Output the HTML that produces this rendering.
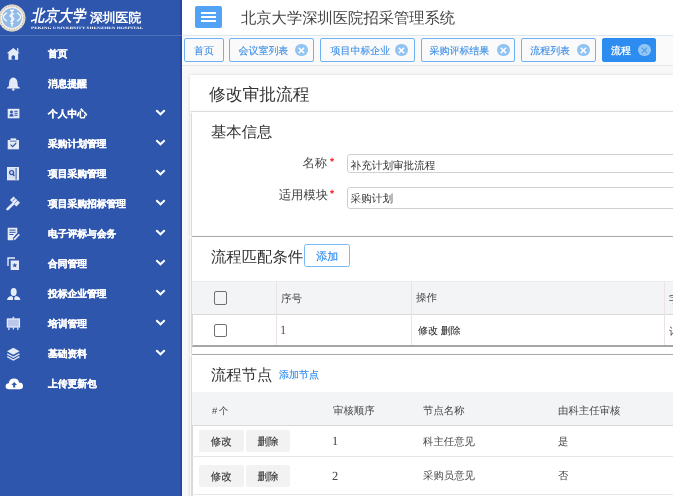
<!DOCTYPE html>
<html><head><meta charset="utf-8">
<style>
*{box-sizing:border-box;margin:0;padding:0}
html,body{width:673px;height:496px;overflow:hidden;background:#f8f8f8;font-family:"Liberation Sans",sans-serif;text-rendering:geometricPrecision}
#wrap{position:absolute;left:0;top:0;width:673px;height:496px;opacity:.999}
#side{position:absolute;left:0;top:0;width:181.5px;height:496px;background:#2f56ad;}
#side .edge{position:absolute;right:0;top:0;width:1.5px;height:496px;background:#25489e;z-index:2}
#logo{position:absolute;left:0;top:0;width:181.5px;height:36px;border-bottom:1px solid #4d6fbd;z-index:3}
.mi{position:absolute;left:0;width:180px;height:30px;color:#fff;font-weight:bold;font-size:9.75px;}
.mi .t{position:absolute;left:48px;top:10px;line-height:14px;white-space:nowrap;-webkit-text-stroke:0.22px #fff;will-change:transform}
svg.ic{position:absolute}
.mi .chev{position:absolute;left:155px;top:11px}
#hdr{position:absolute;left:181px;top:0;width:492px;height:36px;background:#fff;border-bottom:1px solid #dde6ef}
#menubtn{position:absolute;left:14px;top:6px;width:27px;height:22px;background:#52a2f5;border-radius:2px}
#menubtn i{position:absolute;left:6.3px;width:14.5px;height:1.9px;background:#fff}
#title{position:absolute;left:60px;top:10px;font-size:15.3px;color:#444;line-height:18px;white-space:nowrap}
#tabs{position:absolute;left:181px;top:36px;width:492px;height:30px;background:#fafafa;border-bottom:1px solid #e4e4e4}
.tab{position:absolute;top:2.2px;height:24.3px;border:1.3px solid #6db2f4;border-radius:2px;background:#fafafa;color:#3a8ee6;font-size:9.95px;line-height:25.6px;-webkit-text-stroke:.1px #3a8ee6;white-space:nowrap}
.tab .x{position:absolute;top:4.7px;width:12.8px;height:12.8px;border-radius:50%;background:#8fc3f3}
.tab.act{background:#2d8cf0;border-color:#2d8cf0;color:#fff}
.tab.act .x{background:#93c6f5}
#cardhd{position:absolute;left:190px;top:74.5px;width:500px;height:500px;background:#fff;box-shadow:0 0 4px rgba(0,0,0,.13)}
#cdiv{position:absolute;left:190px;top:111px;width:500px;height:1px;background:#e6e6e6}
#ctitle{position:absolute;left:209px;top:83px;font-size:16.75px;color:#333;line-height:24px;white-space:nowrap}
.panel{position:absolute;left:192px;width:500px;background:#fff;box-shadow:0 1.2px 1.2px rgba(0,0,0,.42),-1px 0 3px rgba(0,0,0,.1)}
.ph{position:absolute;left:210.5px;font-size:15.35px;color:#333;line-height:20px;white-space:nowrap}
.lbl{position:absolute;font-size:12.3px;color:#444;line-height:16px;white-space:nowrap;text-align:right}
.star{position:absolute;color:#f22;font-size:10.5px;line-height:10px;font-weight:bold}
.inp{position:absolute;left:346.5px;width:400px;border:1px solid #d0d0d0;border-radius:3px;font-size:10.6px;color:#333;white-space:nowrap;padding-left:2.6px}
#addbtn{position:absolute;left:304px;top:244.3px;width:46.3px;height:22.6px;border:1.2px solid #78b9f4;border-radius:2.5px;color:#2d8cf0;font-size:11px;line-height:24.5px;text-align:center;background:#fff;-webkit-text-stroke:.15px #2d8cf0}
.th{position:absolute;background:#f3f4f6}
.cell{position:absolute;font-size:10.5px;color:#474747;white-space:nowrap;line-height:14px}
.cell.t2{font-size:10.4px}
.vl{position:absolute;width:1px;background:#ece4e4}
.hl{position:absolute;height:1px;background:#dcdcdc}
.cb{position:absolute;width:13px;height:13.5px;border:1.7px solid #707070;border-radius:2px;background:transparent}
.btn{position:absolute;height:22px;background:#f2f2f2;border-radius:2px;font-size:10.5px;color:#3a3a3a;text-align:center;line-height:25px;-webkit-text-stroke:.15px #3a3a3a;will-change:transform}
.tab,#addbtn,.cell,.lbl,.inp,.ph,#ctitle,#title,.star,.mi .t{will-change:transform}
</style></head><body><div id="wrap">
<div id="side">
  <div class="edge"></div>
  <div id="logo">
    <svg style="position:absolute;left:-3px;top:2.5px" width="30" height="30" viewBox="0 0 30 30">
      <circle cx="15" cy="15" r="13.4" fill="#ece7da"/>
      <circle cx="15" cy="15" r="13.2" fill="none" stroke="#cfc6b2" stroke-width=".5"/>
      <circle cx="15" cy="15" r="11.9" fill="none" stroke="#8a7f6c" stroke-width="1" stroke-dasharray="1 1.6" opacity=".6"/>
      <circle cx="15" cy="15" r="10.4" fill="#93bbe7" stroke="#fff" stroke-width=".8"/>
      <path d="M10 9.8 Q2.8 14 10 18.3 M20 9.8 Q27.2 14 20 18.3" fill="none" stroke="#fff" stroke-width="1.1"/>
      <path d="M15 6.8 V23.5 M13 7.3 H17" fill="none" stroke="#fff" stroke-width="1.3"/>
      <path d="M17.3 10.8 Q12.3 11.3 13 13.3 Q17.5 14.6 16.8 16.6 Q16 18.5 13.2 18.3 M13.5 20.5 H16.5" fill="none" stroke="#fff" stroke-width="1.1"/>
    </svg>
    <div style="position:absolute;left:31px;top:4px;color:#fff;font-size:13.2px;line-height:20px;font-style:italic;letter-spacing:0.6px;font-weight:700;white-space:nowrap;transform-origin:0 0;transform:scaleY(1.2);will-change:transform">北京大学</div>
    <div style="position:absolute;left:90px;top:10px;color:#fff;font-size:12.8px;line-height:16px;font-weight:bold;white-space:nowrap;will-change:transform">深圳医院</div>
    <div style="position:absolute;left:31px;top:26px;color:#fff;font-family:'Liberation Serif',serif;font-size:8px;line-height:8px;font-weight:bold;white-space:nowrap;transform-origin:0 0;transform:scale(0.65,0.45)">PEKING UNIVERSITY SHENZHEN HOSPITAL</div>
  </div>
  <div class="mi" style="top:38px"><div class="t">首页</div></div>
  <div class="mi" style="top:68px"><div class="t">消息提醒</div></div>
  <div class="mi" style="top:98px"><div class="t">个人中心</div><svg class="chev" width="11" height="8" viewBox="0 0 11 8"><path d="M1.3 1.3 L5.5 5.3 L9.7 1.3" fill="none" stroke="#fff" stroke-width="2"/></svg></div>
  <div class="mi" style="top:128px"><div class="t">采购计划管理</div><svg class="chev" width="11" height="8" viewBox="0 0 11 8"><path d="M1.3 1.3 L5.5 5.3 L9.7 1.3" fill="none" stroke="#fff" stroke-width="2"/></svg></div>
  <div class="mi" style="top:158px"><div class="t">项目采购管理</div><svg class="chev" width="11" height="8" viewBox="0 0 11 8"><path d="M1.3 1.3 L5.5 5.3 L9.7 1.3" fill="none" stroke="#fff" stroke-width="2"/></svg></div>
  <div class="mi" style="top:188px"><div class="t">项目采购招标管理</div><svg class="chev" width="11" height="8" viewBox="0 0 11 8"><path d="M1.3 1.3 L5.5 5.3 L9.7 1.3" fill="none" stroke="#fff" stroke-width="2"/></svg></div>
  <div class="mi" style="top:218px"><div class="t">电子评标与会务</div><svg class="chev" width="11" height="8" viewBox="0 0 11 8"><path d="M1.3 1.3 L5.5 5.3 L9.7 1.3" fill="none" stroke="#fff" stroke-width="2"/></svg></div>
  <div class="mi" style="top:248px"><div class="t">合同管理</div><svg class="chev" width="11" height="8" viewBox="0 0 11 8"><path d="M1.3 1.3 L5.5 5.3 L9.7 1.3" fill="none" stroke="#fff" stroke-width="2"/></svg></div>
  <div class="mi" style="top:278px"><div class="t">投标企业管理</div><svg class="chev" width="11" height="8" viewBox="0 0 11 8"><path d="M1.3 1.3 L5.5 5.3 L9.7 1.3" fill="none" stroke="#fff" stroke-width="2"/></svg></div>
  <div class="mi" style="top:308px"><div class="t">培训管理</div><svg class="chev" width="11" height="8" viewBox="0 0 11 8"><path d="M1.3 1.3 L5.5 5.3 L9.7 1.3" fill="none" stroke="#fff" stroke-width="2"/></svg></div>
  <div class="mi" style="top:338px"><div class="t">基础资料</div><svg class="chev" width="11" height="8" viewBox="0 0 11 8"><path d="M1.3 1.3 L5.5 5.3 L9.7 1.3" fill="none" stroke="#fff" stroke-width="2"/></svg></div>
  <div class="mi" style="top:368px"><div class="t">上传更新包</div></div>
  <div id="icons">
    <svg class="ic" style="left:7px;top:46px" width="14" height="15" viewBox="0 0 14 15"><path d="M6.3 1.9 L12.8 7.2 H11.1 V13.8 H1.5 V7.2 H-0.2Z" fill="#e6ebf8"/><rect x="10" y="2.2" width="1.3" height="3.5" fill="#e6ebf8"/><path d="M4.6 13.8 V10.3 Q6.3 8 8 10.3 V13.8Z" fill="#2f56ad"/></svg>
    <svg class="ic" style="left:7px;top:76px" width="14" height="15" viewBox="0 0 14 15"><path d="M6.3 1.6 Q10.3 2.2 10.5 7 L10.8 10.3 Q11.5 11.3 12.8 11.6 V12.4 H-0.2 V11.6 Q1.1 11.3 1.8 10.3 L2.1 7 Q2.3 2.2 6.3 1.6Z" fill="#e6ebf8"/><circle cx="6.3" cy="13.5" r="1.2" fill="#e6ebf8"/></svg>
    <svg class="ic" style="left:7px;top:107px" width="14" height="14" viewBox="0 0 14 14"><rect x="0.7" y="1.8" width="11.7" height="9.5" fill="#e6ebf8"/><rect x="2" y="3" width="9.1" height="7.1" fill="#dfe5f5"/><circle cx="4.5" cy="5" r="1.5" fill="#2f56ad"/><path d="M2.3 9.4 Q2.5 6.8 4.5 6.8 Q6.5 6.8 6.7 9.4Z" fill="#2f56ad"/><rect x="7.4" y="3.8" width="3.2" height="1" fill="#2f56ad"/><rect x="7.4" y="5.8" width="3.2" height="1" fill="#2f56ad"/><rect x="7.4" y="7.8" width="3.2" height="1" fill="#2f56ad"/></svg>
    <svg class="ic" style="left:7px;top:137px" width="14" height="14" viewBox="0 0 14 14"><rect x="0.7" y="3" width="11.3" height="9.3" fill="#e6ebf8"/><rect x="3.5" y="1.4" width="5.7" height="2.3" fill="#e6ebf8"/><rect x="3" y="3.7" width="6.7" height="0.8" fill="#2f56ad"/><path d="M3.6 7.6 L5.6 9.6 L9.2 6" fill="none" stroke="#2f56ad" stroke-width="1.2"/></svg>
    <svg class="ic" style="left:7px;top:166px" width="14" height="15" viewBox="0 0 14 15"><path d="M0 1 H12 V14.3 H0Z" fill="#e6ebf8"/><path d="M1.3 2.2 L8.3 1.9 V13.3 L1.3 12.8Z" fill="#d6def2"/><rect x="8.6" y="1.8" width="1" height="12" fill="#2f56ad"/><circle cx="4.6" cy="6.6" r="2" fill="none" stroke="#2f56ad" stroke-width="1.3"/><path d="M5.8 8 L7.4 10" stroke="#2f56ad" stroke-width="1.3"/></svg>
    <svg class="ic" style="left:6px;top:196px" width="15" height="15" viewBox="0 0 15 15"><rect x="4.5" y="2.8" width="9" height="5.2" fill="#e6ebf8" transform="rotate(45 9 5.4)"/><path d="M6.4 5.3 L10.3 1.4 M8.6 7.5 L12.5 3.6" stroke="#2f56ad" stroke-width="0.7"/><path d="M1.6 13.2 L7 7.8" stroke="#e6ebf8" stroke-width="2.6" stroke-linecap="round"/></svg>
    <svg class="ic" style="left:7px;top:227px" width="14" height="14" viewBox="0 0 14 14"><path d="M0.7 0.7 H10.3 V6 L6.3 10.5 V13.3 H0.7Z" fill="#e6ebf8"/><rect x="2.3" y="2.6" width="6.3" height="1" fill="#2f56ad"/><rect x="2.3" y="4.8" width="6.3" height="1" fill="#2f56ad"/><rect x="2.3" y="7" width="4.2" height="1" fill="#2f56ad"/><path d="M7.2 12.6 L12.3 7.4" stroke="#2f56ad" stroke-width="3.2"/><path d="M7.2 12.6 L12.3 7.4" stroke="#e6ebf8" stroke-width="1.6"/></svg>
    <svg class="ic" style="left:7px;top:257px" width="14" height="14" viewBox="0 0 14 14"><path d="M0.3 0.3 H8 V1.7 H1.7 V9 H0.3Z" fill="#e6ebf8"/><rect x="3.7" y="3.5" width="8.3" height="9.5" fill="#e6ebf8"/><path d="M7.8 5.8 L8.5 7.6 L10.3 7.6 L8.9 8.7 L9.4 10.5 L7.8 9.4 L6.2 10.5 L6.7 8.7 L5.3 7.6 L7.1 7.6Z" fill="#2f56ad"/></svg>
    <svg class="ic" style="left:7px;top:286px" width="14" height="15" viewBox="0 0 14 15"><ellipse cx="6.7" cy="5.9" rx="3" ry="4" fill="#e6ebf8"/><path d="M0 14.1 Q0.4 10.6 4.4 10 L6.7 12 L9 10 Q13 10.6 13.4 14.1Z" fill="#e6ebf8"/><path d="M6.2 10.8 H7.2 L7.5 14 H5.9Z" fill="#2f56ad"/></svg>
    <svg class="ic" style="left:6px;top:316px" width="15" height="15" viewBox="0 0 15 15"><rect x="6.6" y="0.8" width="1.6" height="2" fill="#e6ebf8"/><rect x="1.4" y="3" width="12" height="8" fill="#b9c7ea" stroke="#e6ebf8" stroke-width="1.3"/><path d="M3.3 11.6 L2.6 14 M7.4 11.6 V13.6 M11.5 11.6 L12.2 14" stroke="#e6ebf8" stroke-width="1.2"/></svg>
    <svg class="ic" style="left:7px;top:347px" width="14" height="14" viewBox="0 0 14 14"><path d="M6.3 0.8 L12.6 4.3 L6.3 7.8 L0 4.3Z" fill="#e6ebf8"/><path d="M0.2 6.9 L6.3 10.3 L12.4 6.9 M0.2 9.6 L6.3 13 L12.4 9.6" fill="none" stroke="#e6ebf8" stroke-width="1.3"/></svg>
    <svg class="ic" style="left:5px;top:377px" width="19" height="14" viewBox="0 0 19 14"><path d="M4 12.3 Q0.4 12.3 0.6 9 Q0.9 6.4 3.7 6.3 Q4.2 1.4 9 1.4 Q13.5 1.4 14 5.6 Q18 5.6 18 9 Q18 12.3 14.5 12.3Z" fill="#fff"/><path d="M9.2 5 L12 7.9 H10.2 V10.6 H8.2 V7.9 H6.4Z" fill="#2f56ad"/></svg>
  </div>
</div>

<div id="hdr">
  <div id="menubtn"><i style="top:6.4px"></i><i style="top:10.3px"></i><i style="top:14.2px"></i></div>
  <div id="title">北京大学深圳医院招采管理系统</div>
</div>

<div id="tabs">
  <div class="tab" style="left:3px;width:40px;padding-left:9px">首页</div>
  <div class="tab" style="left:48px;width:85px;padding-left:8.6px">会议室列表<span class="x" style="left:65px"><svg width="12.8" height="12.8" viewBox="0 0 12.8 12.8" style="position:absolute;left:0;top:0"><path d="M3.7 3.7 L9.1 9.1 M9.1 3.7 L3.7 9.1" stroke="#fff" stroke-width="1.5"/></svg></span></div>
  <div class="tab" style="left:139px;width:95px;padding-left:9.6px">项目中标企业<span class="x" style="left:74px"><svg width="12.8" height="12.8" viewBox="0 0 12.8 12.8" style="position:absolute;left:0;top:0"><path d="M3.7 3.7 L9.1 9.1 M9.1 3.7 L3.7 9.1" stroke="#fff" stroke-width="1.5"/></svg></span></div>
  <div class="tab" style="left:240px;width:94px;padding-left:7.6px">采购评标结果<span class="x" style="left:75px"><svg width="12.8" height="12.8" viewBox="0 0 12.8 12.8" style="position:absolute;left:0;top:0"><path d="M3.7 3.7 L9.1 9.1 M9.1 3.7 L3.7 9.1" stroke="#fff" stroke-width="1.5"/></svg></span></div>
  <div class="tab" style="left:340px;width:75px;padding-left:8.3px">流程列表<span class="x" style="left:55px"><svg width="12.8" height="12.8" viewBox="0 0 12.8 12.8" style="position:absolute;left:0;top:0"><path d="M3.7 3.7 L9.1 9.1 M9.1 3.7 L3.7 9.1" stroke="#fff" stroke-width="1.5"/></svg></span></div>
  <div class="tab act" style="left:421px;width:54px;padding-left:8px;-webkit-text-stroke:.3px #fff">流程<span class="x" style="left:35px"><svg width="12.8" height="12.8" viewBox="0 0 12.8 12.8" style="position:absolute;left:0;top:0"><path d="M3.7 3.7 L9.1 9.1 M9.1 3.7 L3.7 9.1" stroke="#4a9ae8" stroke-width="1.1"/></svg></span></div>
</div>

<div id="cardhd"></div><div id="cdiv"></div>
<div id="ctitle">修改审批流程</div>

<div class="panel" style="top:111.5px;height:124.5px"></div>
<div class="panel" style="top:236.5px;height:117px"></div>
<div class="panel" style="top:355px;height:160px"></div>
<div class="hl" style="left:192px;top:345.3px;width:481px;height:1.3px;background:#a5a5a5"></div>
<div class="hl" style="left:192.5px;top:236px;width:481px;height:1.3px;background:#a9a9a9"></div>
<div class="hl" style="left:192.5px;top:353.5px;width:481px;height:1.3px;background:#a9a9a9"></div>
<div class="vl" style="left:192px;top:281px;height:65px;background:#d8d8d8"></div>
<div class="vl" style="left:192px;top:392.5px;height:110px;background:#d8d8d8"></div>

<div class="ph" style="top:123px">基本信息</div>
<div class="lbl" style="left:227.2px;width:100px;top:154.5px">名称</div>
<div class="star" style="left:330.3px;top:156.8px">*</div>
<div class="inp" style="top:154px;height:19px;line-height:23px">补充计划审批流程</div>
<div class="lbl" style="left:227.5px;width:100px;top:187px">适用模块</div>
<div class="star" style="left:330.3px;top:189.3px">*</div>
<div class="inp" style="top:186.5px;height:22px;line-height:23px">采购计划</div>

<div class="ph" style="top:248px">流程匹配条件</div>
<div id="addbtn">添加</div>
<div class="th" style="left:192px;top:281px;width:481px;height:33px"></div>
<div class="hl" style="left:192px;top:280.5px;width:481px;background:#ececec"></div>
<div class="hl" style="left:192px;top:313.7px;width:481px;background:#dadada"></div>
<div class="vl" style="left:276.3px;top:281px;height:64px"></div>
<div class="vl" style="left:411px;top:281px;height:64px"></div>
<div class="vl" style="left:664.3px;top:281px;height:64px"></div>
<div class="cb" style="left:214px;top:291px"></div>
<div class="cb" style="left:214px;top:323.5px"></div>
<div class="cell" style="left:281px;top:292px">序号</div>
<div class="cell" style="left:416px;top:291px">操作</div>
<div class="cell" style="left:669px;top:292.5px">字段</div>
<div class="cell" style="left:280px;top:322.6px;font-family:'Liberation Serif',serif;font-size:12.5px;color:#555">1</div>
<div class="cell" style="left:417.6px;top:325.3px;color:#2a2a2a;font-size:10px;-webkit-text-stroke:.06px #2a2a2a;will-change:transform">修改 删除</div>
<div class="cell" style="left:669px;top:325px">计划</div>

<div class="ph" style="top:365.5px">流程节点</div>
<div class="cell" style="left:279px;top:369.2px;font-size:10px;color:#2d8cf0;-webkit-text-stroke:.12px #2d8cf0">添加节点</div>
<div class="th" style="left:192px;top:392.2px;width:481px;height:32.8px"></div>
<div class="hl" style="left:192px;top:424.5px;width:481px;background:#dadada"></div>
<div class="hl" style="left:192px;top:456px;width:481px;background:#e6e6e6"></div>
<div class="hl" style="left:192px;top:494px;width:481px;background:#e6e6e6"></div>
<div class="cell" style="left:212px;top:404.5px;font-size:9.5px"><span style="letter-spacing:1.5px">#</span>个</div>
<div class="cell t2" style="left:333px;top:404.8px">审核顺序</div>
<div class="cell t2" style="left:422.5px;top:404.8px">节点名称</div>
<div class="cell t2" style="left:557.5px;top:404.8px">由科主任审核</div>
<div class="btn" style="left:199px;top:430px;width:44.5px">修改</div>
<div class="btn" style="left:245.7px;top:430px;width:44.2px">删除</div>
<div class="cell t2" style="left:331.5px;top:434.4px;font-size:12.4px;font-family:'Liberation Serif',serif">1</div>
<div class="cell t2" style="left:422.5px;top:436.2px">科主任意见</div>
<div class="cell t2" style="left:557.5px;top:436.2px">是</div>
<div class="btn" style="left:199px;top:464.7px;width:44.5px">修改</div>
<div class="btn" style="left:245.7px;top:464.7px;width:44.2px">删除</div>
<div class="cell t2" style="left:331.5px;top:468.6px;font-size:12.4px;font-family:'Liberation Serif',serif">2</div>
<div class="cell t2" style="left:422.5px;top:470.2px">采购员意见</div>
<div class="cell t2" style="left:557.5px;top:470.2px">否</div>
</div></body></html>
